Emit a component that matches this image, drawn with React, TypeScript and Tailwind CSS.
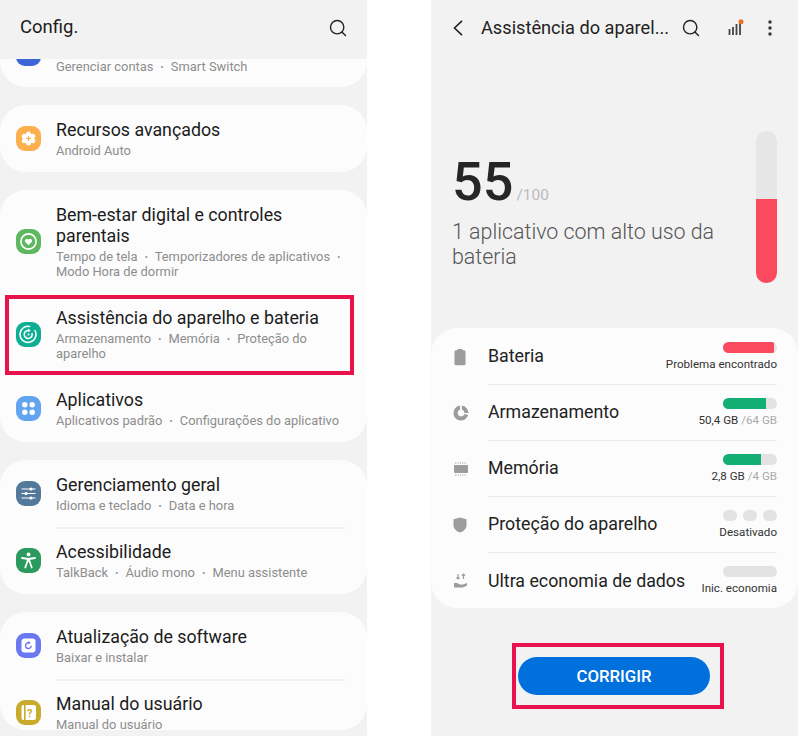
import React from 'react';
import { Search } from 'lucide-react';

const IconBox = ({ color, children }: { color: string; children: React.ReactNode }) => (
  <div className={`w-[25px] h-[25px] rounded-[9px] shrink-0 flex items-center justify-center ${color}`}>
    <svg width="25" height="25" viewBox="0 0 25 25">{children}</svg>
  </div>
);

const FlowerIcon = () => (
  <IconBox color="bg-[#fbb04d]">
    <circle cx="12.5" cy="7.900" r="2.500" fill="#fff" />
    <circle cx="12.5" cy="17.100" r="2.500" fill="#fff" />
    <circle cx="8.300" cy="10.200" r="2.500" fill="#fff" />
    <circle cx="16.700" cy="10.200" r="2.500" fill="#fff" />
    <circle cx="8.300" cy="14.800" r="2.500" fill="#fff" />
    <circle cx="16.700" cy="14.800" r="2.500" fill="#fff" />
    <circle cx="12.5" cy="12.5" r="4.500" fill="#fff" />
    <path d="M12.5 10v5M10 12.5h5" stroke="#fbb04d" strokeWidth="1.200" />
  </IconBox>
);

const HeartIcon = () => (
  <IconBox color="bg-[#5eb85f]">
    <circle cx="12.5" cy="12.5" r="7.600" fill="none" stroke="#fff" strokeWidth="1.600" />
    <path d="M12.5 16.200l-3.200-3.100a2 2 0 0 1 3.200-2.400 2 2 0 0 1 3.200 2.400z" fill="#fff" />
  </IconBox>
);

const CareIcon = () => (
  <IconBox color="bg-[#0fae94]">
    <path d="M19 8.500a8 8 0 1 1-5.500-4" fill="none" stroke="#fff" strokeWidth="1.500" strokeLinecap="round" />
    <path d="M15.900 11a4 4 0 1 1-3.400-2.500" fill="none" stroke="#fff" strokeWidth="1.500" />
    <path d="M12.200 6.400l2.400 2.100-2.400 2z" fill="#fff" />
    <circle cx="12.5" cy="12.5" r="1" fill="#fff" />
  </IconBox>
);

const AppsIcon = () => (
  <IconBox color="bg-[#62a4f0]">
    <circle cx="8.800" cy="8.800" r="2.700" fill="#fff" />
    <circle cx="16.200" cy="8.800" r="2.700" fill="#fff" />
    <circle cx="8.800" cy="16.200" r="2.700" fill="#fff" />
    <circle cx="16.200" cy="16.200" r="2.700" fill="#fff" />
  </IconBox>
);

const SlidersIcon = () => (
  <IconBox color="bg-[#53799a]">
    <path d="M5.500 8h14M5.500 12.5h14M5.500 17h14" stroke="#fff" strokeWidth="1.200" />
    <circle cx="15" cy="8" r="1.600" fill="#fff" />
    <circle cx="10" cy="12.5" r="1.600" fill="#fff" />
    <circle cx="15" cy="17" r="1.600" fill="#fff" />
  </IconBox>
);

const AccessIcon = () => (
  <IconBox color="bg-[#2b9a5f]">
    <circle cx="12.5" cy="6.400" r="1.900" fill="#fff" />
    <path d="M6 10l6.500 1 6.500-1" fill="none" stroke="#fff" strokeWidth="1.800" strokeLinecap="round" />
    <path d="M12.500 11v3" stroke="#fff" strokeWidth="3.400" />
    <path d="M11.200 14l-1.900 5.500M13.800 14l1.900 5.500" fill="none" stroke="#fff" strokeWidth="1.800" strokeLinecap="round" />
  </IconBox>
);

const UpdateIcon = () => (
  <IconBox color="bg-[#6b78ef]">
    <rect x="5.500" y="5.500" width="14" height="14" rx="3" fill="#fff" />
    <path d="M15.300 12.800a2.900 2.900 0 1 1-2.400-3" fill="none" stroke="#6b78ef" strokeWidth="1.400" />
    <path d="M12.200 7.900l2.600 1.900-2.600 1.600z" fill="#6b78ef" />
  </IconBox>
);

const ManualIcon = () => (
  <IconBox color="bg-[#c8ab2b]">
    <rect x="5.500" y="5" width="14.500" height="15" rx="2" fill="#fff" />
    <rect x="8" y="4" width="1.600" height="17" fill="#c8ab2b" />
    <text x="11" y="17" fontSize="11" fontWeight="700" fontFamily="Roboto, sans-serif" fill="#c8ab2b">?</text>
  </IconBox>
);

const Row = ({ icon, title, sub }: { icon: React.ReactNode; title: React.ReactNode; sub: React.ReactNode }) => (
  <div className="flex items-center gap-[15px] pl-4 pr-[22px] py-[14px]">
    {icon}
    <div className="flex-1 min-w-0">
      <div className="text-[17.8px] leading-[21px] text-[#1b1b1b]">{title}</div>
      <div className="text-[12.9px] leading-[15px] mt-[3px] text-[#8d8d8d]">{sub}</div>
    </div>
  </div>
);

const Divider = () => <div className="h-[2px] -mb-[2px] bg-[#f1f1f1] ml-14 mr-[22px]" />;

const Dot = () => (
  <>
    {' '}
    <span className="mx-[4px] text-[9px] leading-[0] relative -top-[1px]">•</span>{' '}
  </>
);

const Settings = () => (
  <div className="w-[367px] h-[736px] bg-[#f2f2f2] overflow-hidden shrink-0">
    <div className="h-[59px] flex items-center justify-between pl-5 pr-[19px] pt-[6px] pb-[9px]">
      <span className="text-[18.5px] text-[#1b1b1b]">Config.</span>
      <Search size={20} strokeWidth={1.7} className="text-[#222]" />
    </div>

    <div className="h-[28px] bg-[#fcfcfc] rounded-b-[26px] overflow-hidden flex gap-[15px] pl-4">
      <div className="w-[25px] h-[25px] rounded-[9px] bg-[#3c66d6] -mt-[18px] shrink-0" />
      <div className="text-[12.9px] leading-[15px] text-[#8d8d8d]">
        Gerenciar contas<Dot />Smart Switch
      </div>
    </div>

    <div className="bg-[#fcfcfc] rounded-[26px] mt-[18px]">
      <Row icon={<FlowerIcon />} title="Recursos avançados" sub="Android Auto" />
    </div>

    <div className="bg-[#fcfcfc] rounded-[26px] mt-[18px]">
      <Row
        icon={<HeartIcon />}
        title="Bem-estar digital e controles parentais"
        sub={<>Tempo de tela<Dot />Temporizadores de aplicativos<Dot />Modo Hora de dormir</>}
      />
      <div className="relative">
        <Row
          icon={<CareIcon />}
          title="Assistência do aparelho e bateria"
          sub={<>Armazenamento<Dot />Memória<Dot />Proteção do aparelho</>}
        />
        <div className="absolute left-[5px] w-[349px] top-[2px] h-[80px] border-4 border-[#e8124c]" />
      </div>
      <Row
        icon={<AppsIcon />}
        title="Aplicativos"
        sub={<>Aplicativos padrão<Dot />Configurações do aplicativo</>}
      />
    </div>

    <div className="bg-[#fcfcfc] rounded-[26px] mt-[18px]">
      <Row icon={<SlidersIcon />} title="Gerenciamento geral" sub={<>Idioma e teclado<Dot />Data e hora</>} />
      <Divider />
      <Row icon={<AccessIcon />} title="Acessibilidade" sub={<>TalkBack<Dot />Áudio mono<Dot />Menu assistente</>} />
    </div>

    <div className="bg-[#fcfcfc] rounded-[26px] mt-[18px] h-[118px] overflow-hidden">
      <Row icon={<UpdateIcon />} title="Atualização de software" sub="Baixar e instalar" />
      <Divider />
      <Row icon={<ManualIcon />} title="Manual do usuário" sub="Manual do usuário" />
    </div>
  </div>
);

const BatteryGlyph = () => (
  <svg width="14" height="18" viewBox="0 0 14 18" fill="#9c9c9c">
    <path d="M4.500 1h5v1.200h1.500a1.500 1.500 0 0 1 1.500 1.500v12a1.500 1.500 0 0 1-1.500 1.500H3a1.500 1.500 0 0 1-1.500-1.500v-12A1.500 1.500 0 0 1 3 2.200h1.500z" />
  </svg>
);

const PieGlyph = () => (
  <svg width="16" height="16" viewBox="0 0 16 16" fill="#9c9c9c">
    <path d="M7 .6v4a3.500 3.500 0 1 0 4.500 4.400l3.700 1A7.500 7.500 0 1 1 7 .6z" />
    <path d="M8.800.6a7.500 7.500 0 0 1 6.600 7.300h-4A3.500 3.500 0 0 0 8.800 4.600z" />
  </svg>
);

const ChipGlyph = () => (
  <svg width="16" height="16" viewBox="0 0 16 16" fill="#9c9c9c">
    <rect x="1" y="4" width="14" height="8" rx="1" />
    <path d="M2 2h12M2 14h12" stroke="#9c9c9c" strokeWidth="1" strokeDasharray="1.200 1.200" />
  </svg>
);

const ShieldGlyph = () => (
  <svg width="14" height="16" viewBox="0 0 14 16" fill="#9c9c9c">
    <path d="M7 .5l6.500 1.800v6.200c0 3.300-3 5.900-6.500 7-3.500-1.100-6.500-3.700-6.500-7V2.300z" />
  </svg>
);

const SaverGlyph = () => (
  <svg width="16" height="16" viewBox="0 0 16 16" fill="#9c9c9c">
    <path d="M5 1v5M3.500 4.500L5 6l1.500-1.500M10.500 6V1M9 2.500L10.500 1 12 2.500" fill="none" stroke="#9c9c9c" strokeWidth="1.200" />
    <path d="M1 10h3l3 1.500h3l4-1.500v2.500l-4 2H1z" />
  </svg>
);

const Bar = ({ fill, width }: { fill: string; width: string }) => (
  <div className="w-[54px] h-[11px] rounded-full bg-[#e3e3e3] overflow-hidden">
    <div className={`h-full ${fill} ${width}`} />
  </div>
);

const StatusRow = ({ icon, label, meter, value, last }: { icon: React.ReactNode; label: string; meter: React.ReactNode; value: React.ReactNode; last?: boolean }) => (
  <div className="h-[56px] flex ml-4 pr-[21px]">
    <div className="w-[28px] shrink-0 flex items-center pl-[6px]">{icon}</div>
    <div className={`ml-[13px] flex-1 flex items-center justify-between ${last ? '' : 'border-b border-[#eaeaea]'}`}>
      <span className="text-[17.8px] text-[#222] whitespace-nowrap">{label}</span>
      <div className="flex flex-col items-end gap-[4px]">
        {meter}
        <div className="text-[11.6px] leading-[15px] text-[#333] whitespace-nowrap">{value}</div>
      </div>
    </div>
  </div>
);

const Care = () => (
  <div className="w-[367px] h-[736px] bg-[#f2f2f3] overflow-hidden shrink-0">
    <div className="h-[54px] flex items-center pl-[22px] pt-[1px]">
      <svg width="10" height="16" viewBox="0 0 10 16" className="shrink-0">
        <path d="M9 .8L1.500 8 9 15.200" fill="none" stroke="#222" strokeWidth="1.600" />
      </svg>
      <span className="ml-[18px] text-[18.2px] text-[#222] whitespace-nowrap">Assistência do aparel...</span>
      <Search size={20} strokeWidth={1.7} className="ml-[12px] text-[#222] shrink-0" />
      <svg width="16" height="18" viewBox="0 0 16 18" className="ml-[27px] shrink-0">
        <path d="M1.500 10v6M5 8v8M8.500 5v11M12 3v13" stroke="#444" strokeWidth="1.800" />
        <circle cx="13" cy="2.800" r="2.500" fill="#f0701f" />
      </svg>
      <svg width="4" height="16" viewBox="0 0 4 16" className="ml-[24px] shrink-0">
        <circle cx="2" cy="2" r="1.700" fill="#333" />
        <circle cx="2" cy="8" r="1.700" fill="#333" />
        <circle cx="2" cy="14" r="1.700" fill="#333" />
      </svg>
    </div>

    <div className="h-[274px] flex pl-[21px] pr-[21px] pt-[77px]">
      <div className="flex-1">
        <div className="flex items-baseline mt-[18px]">
          <span className="text-[54px] leading-[66px] font-medium text-[#262626]">55</span>
          <span className="ml-[3px] text-[15.5px] text-[#bbb]">/100</span>
        </div>
        <div className="text-[21.4px] leading-[25px] font-light text-[#555] w-[285px] mt-[4px]">
          1 aplicativo com alto uso da bateria
        </div>
      </div>
      <div className="w-[21px] h-[152px] rounded-full bg-[#e6e6e6] overflow-hidden flex flex-col justify-end">
        <div className="h-[84px] bg-[#fb4a5e]" />
      </div>
    </div>

    <div className="bg-[#fcfcfc] rounded-[26px] h-[280px] pt-[1px]">
      <StatusRow icon={<BatteryGlyph />} label="Bateria" meter={<Bar fill="bg-[#fb4a5e]" width="w-[94%]" />} value="Problema encontrado" />
      <StatusRow
        icon={<PieGlyph />}
        label="Armazenamento"
        meter={<Bar fill="bg-[#13ae74]" width="w-[80%]" />}
        value={<>50,4 GB <span className="text-[#aaa]">/64 GB</span></>}
      />
      <StatusRow
        icon={<ChipGlyph />}
        label="Memória"
        meter={<Bar fill="bg-[#13ae74]" width="w-[70%]" />}
        value={<>2,8 GB <span className="text-[#aaa]">/4 GB</span></>}
      />
      <StatusRow
        icon={<ShieldGlyph />}
        label="Proteção do aparelho"
        meter={
          <div className="flex gap-[6px]">
            <div className="w-[14px] h-[11px] rounded-full bg-[#e3e3e3]" />
            <div className="w-[14px] h-[11px] rounded-full bg-[#e3e3e3]" />
            <div className="w-[14px] h-[11px] rounded-full bg-[#e3e3e3]" />
          </div>
        }
        value="Desativado"
      />
      <StatusRow icon={<SaverGlyph />} label="Ultra economia de dados" meter={<Bar fill="" width="w-0" />} value="Inic. economia" last />
    </div>

    <div className="ml-[81px] mt-[35px] w-[212px] h-[66px] border-4 border-[#e8124c] pl-[2px] pt-[10px]">
      <button className="w-[192px] h-[38px] rounded-full bg-[#0070dc] text-white text-[16.8px] font-medium pt-[1px]">CORRIGIR</button>
    </div>
  </div>
);

export default function App() {
  return (
    <div className="w-[798px] h-[736px] bg-white flex justify-between overflow-hidden font-['Roboto',sans-serif]">
      <Settings />
      <Care />
    </div>
  );
}
